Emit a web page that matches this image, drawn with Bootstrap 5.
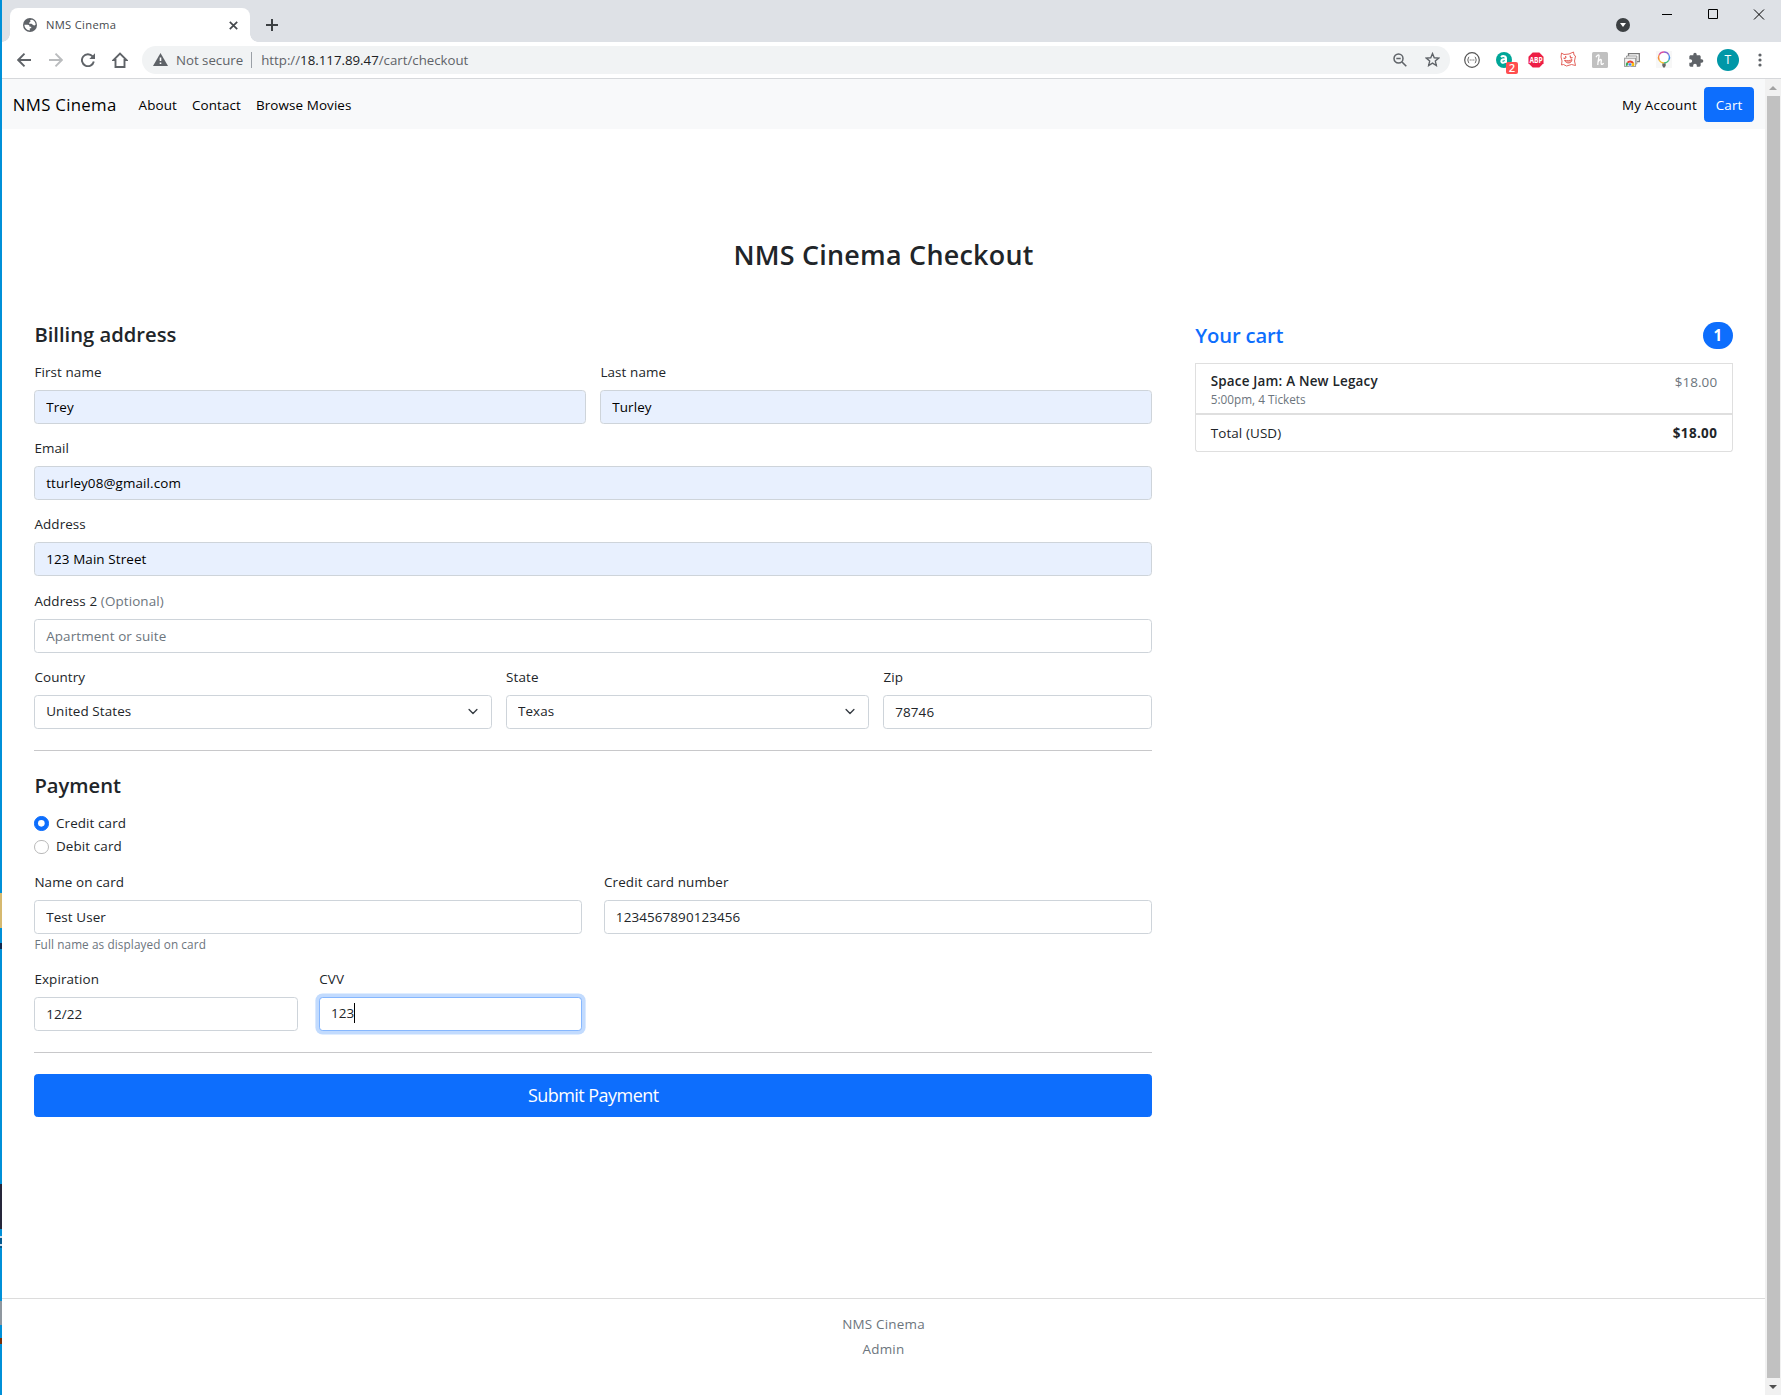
<!DOCTYPE html>
<html lang="en">
<head>
<meta charset="utf-8">
<title>NMS Cinema</title>
<link href="https://cdn.jsdelivr.net/npm/bootstrap@5.3.0/dist/css/bootstrap.min.css" rel="stylesheet">
<style>
html{font-size:14.4px}
body{height:1395px;overflow:hidden;font-family:"Open Sans","Noto Sans",sans-serif;font-size-adjust:.5;letter-spacing:.1px;background:#fff}
.desk-edge{width:2px;flex:none;background:linear-gradient(#0090d8 0 893px,#d6b96f 893px 928px,#0090d8 928px 943px,#102a50 943px 949px,#0090d8 949px 1184px,#26263a 1184px 1229px,#0090d8 1229px 1236px,#cde 1236px 1238px,#035a90 1238px 1244px,#cde 1244px 1246px,#035a90 1246px 1248px,#0090d8 1248px 1301px,#8f979f 1301px 1325px,#0090d8 1325px 1338px,#7a2f08 1338px 1344px,#0090d8 1344px)}
.tab-strip{height:42px;background:#dee1e6}
.chrome-tab{width:240px;height:34px;margin:8px 0 0 8px;background:#fff;border-radius:8px 8px 0 0;position:relative;padding:0 12px 0 13px}
.chrome-tab::before,.chrome-tab::after{content:"";position:absolute;bottom:0;width:8px;height:8px}
.chrome-tab::before{left:-8px;background:radial-gradient(circle at 0 0,transparent 7.5px,#fff 8px)}
.chrome-tab::after{right:-8px;background:radial-gradient(circle at 100% 0,transparent 7.5px,#fff 8px)}
.tab-title{font-size:12px;color:#45494d;margin-left:9px;letter-spacing:.3px}
.new-tab{margin:19px 0 0 16px}
.tool-bar{height:37px;border-bottom:1px solid #d6d8db;background:#fff;padding:0 5px 1px 6px}
.cell{width:32px;flex:none;display:flex;justify-content:center;align-items:center}
.omni{height:28px;border-radius:14px;background:#f1f3f4;color:#5f6368;font-size:14.2px;letter-spacing:0;margin:0 6px;padding:0 2px 0 11px;width:1308px;flex:none}
.omni span{padding-top:2px}
.omni .insecure{margin-left:8px}
.omni b{font-weight:400;color:#202124}
.omni .sep{width:1px;height:16px;background:#9aa0a6;margin:0 9px 0 8px;padding:0}
.avatar{width:22px;height:22px;border-radius:50%;background:#0097a7;color:#fff;font-size:13px;line-height:22px;text-align:center}
.ext-badge{position:absolute;left:10px;top:10px;width:12px;height:12px;border-radius:2px;background:#ff4f4f;color:#fff;font-size:12px;line-height:12px;text-align:center;font-weight:600}
.abp-svg{overflow:visible}
.abp{font-weight:700;font-size:8.500px;fill:#fff;letter-spacing:0;font-size-adjust:none}
.site-nav{height:50px;background:#f8f9fa;padding:0 10.8px}
.site-nav .navbar-brand{color:#000;font-size:18px;margin-right:22px;padding-top:1px;padding-bottom:0;letter-spacing:.3px;line-height:25px}
.site-nav .plain{color:#000;text-decoration:none;margin-right:15px;padding-top:3px}
.site-nav .account{letter-spacing:.2px;margin-right:7px}
.site-nav .btn{height:35px;padding-top:7px}
.scroll-rail{width:16px;flex:none;background:#f1f1f1}
.scroll-rail .thumb{width:13px;margin-left:2px;background:#c1c1c1;flex:1}
.scroll-rail .arrow{height:17px;display:flex;align-items:center;justify-content:center}
.form-control,.form-select{height:33.9px;border-color:#ced4da;border-radius:3.6px;font-size-adjust:inherit;letter-spacing:inherit}
.form-control::placeholder{color:#6c757d}
.form-select{background-size:14.4px 10.8px}
.form-label{height:21.6px;margin-bottom:6.450px;display:block}
.form-check-input:not(:checked){border-color:#b9b9b9}
.text-muted{color:#6c757d!important}
.filled{background-color:#e8f0fe!important;color:#000}
hr{opacity:1;height:1px;border:0;background:#c8c8ca}
hr.my-4{margin-top:21px!important;margin-bottom:21.500px!important}
.page-title{margin:109px 0 48.800px}
h2,h4,h6{font-weight:600!important}
h2.page-title{letter-spacing:.250px}
h4{letter-spacing:0}
.sec-title{padding-top:1px;margin-bottom:13.400px}
.cart-head{margin-bottom:13.800px}
.cart-head .text-primary{padding-top:2px;letter-spacing:-.150px}
.hint{display:block;height:20.500px;line-height:21.600px;font-size:12.600px;letter-spacing:.1px}
.page-foot{height:97px;border-top:1px solid #dcdcdc;color:#6c757d;letter-spacing:.2px;padding-top:15px}
.page-foot .foot-name{margin-bottom:3px}
.form-check{min-height:21.6px}
.focused{border-color:#86b7fe;box-shadow:0 0 0 3.6px rgba(13,110,253,.25)}
.cart-list .list-group-item{border-color:#dfdfdf;padding:8px 14.4px 6px}
.cart-list{border-radius:0 0 3.6px 3.6px}
.cart-list .list-group-item:first-child{border-radius:0;border-bottom-width:2px;padding-top:8.600px;padding-bottom:5.400px}
.cart-list .list-group-item:last-child{border-radius:0 0 3.6px 3.6px}
.cart-list small{font-size:12.6px;letter-spacing:0}
.cart-list h6{letter-spacing:.2px}
.cart-list strong{letter-spacing:.35px}
.btn{border-radius:3.6px}
.caret{display:inline-block;width:1px;height:20px;background:#000;vertical-align:-5px}
.submit-btn{height:43px;padding:7px;font-size:18px;letter-spacing:-.550px}
</style>
<script src="https://cdn.jsdelivr.net/npm/bootstrap@5.3.0/dist/js/bootstrap.bundle.min.js"></script>
</head>
<body class="d-flex">
<div class="desk-edge"></div>
<div class="flex-grow-1 d-flex flex-column">
  <div class="tab-strip d-flex">
    <div class="chrome-tab d-flex align-items-center">
      <svg width="14" height="14" viewBox="0 0 14 14"><circle cx="7" cy="7" r="7" fill="#5f6368"/><path d="M7 2.600c1-.9 1.800-1 2.600-.5 2 1 3 2.700 3 4.700-.8.800-1.800.7-2.600.2-.8-.7-1.200-1.200-2.500-1.200H6.300c-.5-.8 0-1.500.9-1.700.5-.4.200-1-.2-1.500zM1.400 6.800h3.200c1.500 0 2 .9 2 1.900h1.600v1.600H6.800v2.100C4 12.400 1.500 10.200 1.400 6.800z" fill="#fff"/></svg>
      <span class="tab-title">NMS Cinema</span>
      <svg class="ms-auto" width="9" height="9" viewBox="0 0 9 9"><path d="M.8.8l7.400 7.400M8.200.8.8 8.200" stroke="#45494d" stroke-width="1.700"/></svg>
    </div>
    <svg class="new-tab" width="12" height="12" viewBox="0 0 12 12"><path d="M6 0v12M0 6h12" stroke="#3c4043" stroke-width="2"/></svg>
    <svg class="ms-auto" width="165" height="42" viewBox="0 0 165 42"><circle cx="7" cy="25" r="7" fill="#3c4043"/><path d="M4 23h6l-3 4z" fill="#fff"/><path d="M46 14.500h10M92.500 9.500h9v9h-9zM138 9.500l10 10M148 9.500l-10 10" stroke="#000" fill="none"/></svg>
  </div>
  <div class="tool-bar d-flex align-items-center">
    <div class="cell"><svg width="14" height="14" viewBox="0 0 14 14"><path d="M14 7H1.500M7.500.7 1.200 7l6.300 6.300" fill="none" stroke="#5f6368" stroke-width="1.900"/></svg></div>
    <div class="cell"><svg width="14" height="14" viewBox="0 0 14 14"><path d="M0 7h12.500M6.500.7 12.800 7l-6.300 6.300" fill="none" stroke="#babcbe" stroke-width="1.900"/></svg></div>
    <div class="cell"><svg width="14" height="14" viewBox="0 0 14 14"><path d="M11.600 3.400A6 6 0 1 0 12.800 8.500" fill="none" stroke="#5f6368" stroke-width="1.900"/><path d="M14 .3V6H8.300z" fill="#5f6368"/></svg></div>
    <div class="cell"><svg width="16" height="16" viewBox="0 0 16 16"><path d="M3.500 15V8H1.500L8 1.500 14.500 8h-2v7z" fill="none" stroke="#5f6368" stroke-width="1.900"/></svg></div>
    <div class="omni d-flex align-items-center">
      <svg width="15" height="13" viewBox="0 0 15 13"><path d="M7.500 0 15 13H0z" fill="#5f6368"/><path d="M6.700 4.500h1.600V8H6.700zM6.700 9.500h1.600V11H6.700z" fill="#fff"/></svg>
      <span class="insecure">Not secure</span><span class="sep"></span><span>http://<b>18.117.89.47</b>/cart/checkout</span>
      <div class="cell ms-auto"><svg width="14" height="14" viewBox="0 0 14 14"><circle cx="5.500" cy="5.500" r="4.500" fill="none" stroke="#5f6368" stroke-width="1.500"/><path d="M3.300 5.500h4.400M9 9l4.300 4.300" stroke="#5f6368" stroke-width="1.600"/></svg></div>
      <div class="cell"><svg width="15" height="15" viewBox="0 0 24 24"><path d="M12 2.500l2.800 6.700 7.200.6-5.500 4.700 1.700 7.100L12 17.800l-6.200 3.800 1.700-7.100L2 9.800l7.200-.6z" fill="none" stroke="#5f6368" stroke-width="2.200"/></svg></div>
    </div>
    <div class="cell"><svg width="16" height="16" viewBox="0 0 16 16"><circle cx="8" cy="8" r="7.300" fill="#fff" stroke="#555" stroke-width="1.200"/><path d="M5.200 5c-1.300 0-.5 2.400-1.700 3 1.200.6.400 3 1.700 3M10.800 5c1.300 0 .5 2.400 1.700 3-1.200.6-.4 3-1.700 3" fill="none" stroke="#555"/><path d="M5.700 8h1M7.500 8h1M9.300 8h1" stroke="#555" stroke-width="1.200"/></svg></div>
    <div class="cell"><div class="position-relative d-flex"><svg width="16" height="16" viewBox="0 0 16 16"><circle cx="8" cy="8" r="8" fill="#00a698"/><path d="M5 5.200C6.500 3.500 10 3.700 10 6.300V11M10 7.300C7.500 7 5.300 7.500 5.300 9.200c0 2 3.600 1.900 4.700-.2" fill="none" stroke="#fff" stroke-width="2"/></svg><span class="ext-badge">2</span></div></div>
    <div class="cell"><svg class="abp-svg" width="16" height="16" viewBox="0 0 17 17"><path d="M5 .5h7L16.500 5v7L12 16.500H5L.5 12V5z" fill="#ed1e45"/><text class="abp" x="8.500" y="11.600" text-anchor="middle" textLength="14" lengthAdjust="spacingAndGlyphs">ABP</text></svg></div>
    <div class="cell"><svg width="17" height="17" viewBox="0 0 17 17" fill="none" stroke="#e0534c"><path d="M1.500 2 4 3.500 9 3l4.500-2 .5 3 1.500 1-1 5 1 4.500-4-1-5 1.500-3-1.500-2 .5L2 10 1 6z" fill="#fff" stroke-width=".9"/><path d="M5.500 5l.5 2M10 4.500l.5 2M3.500 7l2 .6M12.500 6.500l-2 .6" stroke-width="1.100"/><path d="M4.500 9.300c2.500.8 5.500.4 7.500-.8-.2 4-5.500 5-7.500.8z" fill="#f3b0ac" stroke-width=".9"/></svg></div>
    <div class="cell"><svg width="16" height="16" viewBox="0 0 16 16"><rect width="16" height="16" rx="1.500" fill="#c0c0c0"/><path d="M4 5.200C4.800 3.500 6.500 2.500 7 3.200 7.500 4.500 6 7 5.800 13M5.800 10.500C7 7.500 9.500 6.500 9.300 8.700c-.3 1.800-.5 3.300.3 3.700.8.200 1.500-.5 2-1.300" fill="none" stroke="#fff" stroke-width="1.300"/></svg></div>
    <div class="cell"><svg width="16" height="14" viewBox="0 0 16 14"><path d="M4.500 3V.7h10.800v8H13" fill="none" stroke="#7b7b7b" stroke-width="1.300"/><path d="M2.500 4.500V3h10.300v8H12" fill="none" stroke="#999"/><rect x=".6" y="5.200" width="11" height="8.200" fill="#f3f3f3" stroke="#999"/><path d="M2 13a4 4 0 0 1 1-4L6 11.500z" fill="#34a853"/><path d="M2.700 9.300A4.200 4.200 0 0 1 10 10l-4 .8z" fill="#ea4335"/><path d="M6 10.500l4-.8A4 4 0 0 1 10 13H6z" fill="#fbbc05"/><circle cx="6" cy="11.500" r="1.700" fill="#4285f4" stroke="#fff" stroke-width=".6"/></svg></div>
    <div class="cell"><svg width="16" height="17" viewBox="0 0 16 17"><rect width="16" height="17" fill="#f7f7f7"/><circle cx="8" cy="6.500" r="5.500" fill="#fff"/><g fill="none" stroke-width="1.300"><path d="M8 1a5.500 5.500 0 0 1 4.800 2.800" stroke="#8a63d2"/><path d="M12.800 3.800a5.500 5.500 0 0 1 0 5.400" stroke="#3f8ee8"/><path d="M12.800 9.200A5.500 5.500 0 0 1 8 12" stroke="#45c07a"/><path d="M8 12a5.500 5.500 0 0 1-4.800-2.800" stroke="#f4c430"/><path d="M3.200 9.200a5.500 5.500 0 0 1 0-5.400" stroke="#f58b3b"/><path d="M3.200 3.800A5.500 5.500 0 0 1 8 1" stroke="#d94fa0"/></g><path d="M6.300 12.500h3.400v2L8.800 16.500H7.200l-.9-2z" fill="#666"/></svg></div>
    <div class="cell"><svg width="16" height="16" viewBox="0 0 24 24"><path fill="#5f6368" d="M20.500 11H19V7c0-1.100-.9-2-2-2h-4V3.500a2.500 2.500 0 0 0-5 0V5H4c-1.100 0-1.990.9-1.990 2v3.800H3.500c1.490 0 2.700 1.210 2.700 2.700s-1.210 2.700-2.700 2.700H2V20c0 1.100.9 2 2 2h3.800v-1.500c0-1.490 1.210-2.700 2.700-2.700s2.700 1.210 2.700 2.700V22H17c1.100 0 2-.9 2-2v-4h1.500a2.500 2.500 0 0 0 0-5z"/></svg></div>
    <div class="cell"><div class="avatar">T</div></div>
    <div class="cell"><svg width="4" height="14" viewBox="0 0 4 14" fill="#5f6368"><circle cx="2" cy="2" r="1.600"/><circle cx="2" cy="7" r="1.600"/><circle cx="2" cy="12" r="1.600"/></svg></div>
  </div>
  <div class="d-flex flex-grow-1">
    <div class="flex-grow-1 d-flex flex-column">
      <nav class="site-nav d-flex align-items-center">
        <a class="navbar-brand" href="#">NMS Cinema</a>
        <a class="plain" href="#">About</a><a class="plain" href="#">Contact</a><a class="plain" href="#">Browse Movies</a>
        <a class="plain account ms-auto" href="#">My Account</a><a class="btn btn-primary" href="#">Cart</a>
      </nav>
      <main class="flex-grow-1" style="padding:0 10.8px">
        <h2 class="page-title text-center">NMS Cinema Checkout</h2>
        <div class="row g-5 mx-0 mt-0">
          <div class="col-8 mt-0">
            <h4 class="sec-title">Billing address</h4>
            <div class="row g-3">
              <div class="col-6"><label class="form-label">First name</label><input class="form-control filled" value="Trey"></div>
              <div class="col-6"><label class="form-label">Last name</label><input class="form-control filled" value="Turley"></div>
              <div class="col-12"><label class="form-label">Email</label><input class="form-control filled" value="tturley08@gmail.com"></div>
              <div class="col-12"><label class="form-label">Address</label><input class="form-control filled" value="123 Main Street"></div>
              <div class="col-12"><label class="form-label">Address 2 <span class="text-muted">(Optional)</span></label><input class="form-control" placeholder="Apartment or suite"></div>
              <div class="col-5"><label class="form-label">Country</label><select class="form-select"><option>United States</option></select></div>
              <div class="col-4"><label class="form-label">State</label><select class="form-select"><option>Texas</option></select></div>
              <div class="col-3"><label class="form-label">Zip</label><input class="form-control" value="78746"></div>
            </div>
            <hr class="my-4">
            <h4 class="sec-title">Payment</h4>
            <div class="mb-3">
              <div class="form-check"><input class="form-check-input" type="radio" name="pay" id="credit" checked><label class="form-check-label" for="credit">Credit card</label></div>
              <div class="form-check"><input class="form-check-input" type="radio" name="pay" id="debit"><label class="form-check-label" for="debit">Debit card</label></div>
            </div>
            <div class="row gx-4 gy-3">
              <div class="col-6"><label class="form-label">Name on card</label><input class="form-control" value="Test User"><small class="hint text-muted">Full name as displayed on card</small></div>
              <div class="col-6"><label class="form-label">Credit card number</label><input class="form-control" value="1234567890123456"></div>
              <div class="col-3"><label class="form-label">Expiration</label><input class="form-control" value="12/22"></div>
              <div class="col-3"><label class="form-label">CVV</label><div class="form-control focused">123<span class="caret"></span></div></div>
            </div>
            <hr class="my-4">
            <button class="btn btn-primary submit-btn w-100" type="button">Submit Payment</button>
          </div>
          <div class="col-4 mt-0">
            <h4 class="cart-head d-flex justify-content-between align-items-center"><span class="text-primary">Your cart</span><span class="badge bg-primary rounded-pill">1</span></h4>
            <ul class="list-group cart-list">
              <li class="list-group-item d-flex justify-content-between lh-sm"><div><h6 class="my-0">Space Jam: A New Legacy</h6><small class="text-muted">5:00pm, 4 Tickets</small></div><span class="text-muted">$18.00</span></li>
              <li class="list-group-item d-flex justify-content-between border-top-0"><span>Total (USD)</span><strong>$18.00</strong></li>
            </ul>
          </div>
        </div>
      </main>
      <footer class="page-foot text-center"><p class="foot-name">NMS Cinema</p><p class="mb-0">Admin</p></footer>
    </div>
    <div class="scroll-rail d-flex flex-column">
      <div class="arrow"><svg width="8" height="4" viewBox="0 0 8 4"><path d="M4 0l4 4H0z" fill="#a3a3a3"/></svg></div>
      <div class="thumb"></div>
      <div class="arrow"><svg width="8" height="4" viewBox="0 0 8 4"><path d="M4 4l4-4H0z" fill="#505050"/></svg></div>
    </div>
  </div>
</div>
</body>
</html>
